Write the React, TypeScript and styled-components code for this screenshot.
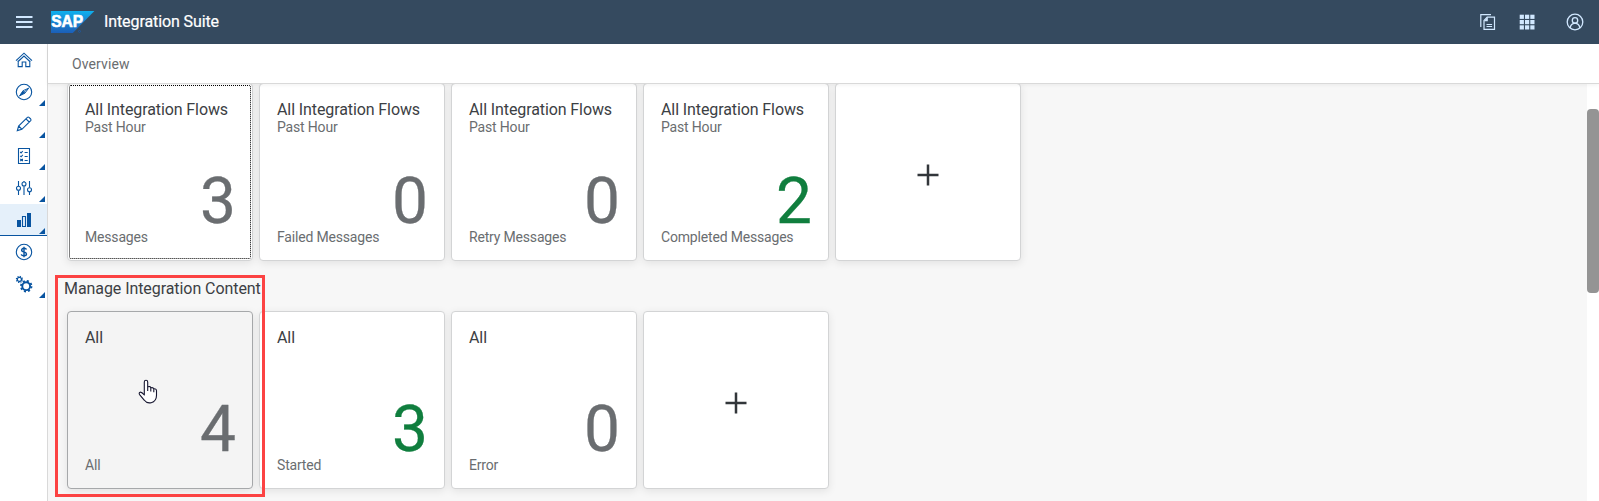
import React from "react";
import styled, { createGlobalStyle, css } from "styled-components";

const Global = createGlobalStyle`
  *, *::before, *::after { box-sizing: border-box; }
  body { margin: 0; background: #f7f7f7; font-family: Roboto, "Noto Sans", sans-serif; color: #32363a; overflow: hidden; }
`;

const Page = styled.div`
  display: flex;
  flex-direction: column;
  width: 1599px;
  height: 501px;
  overflow: hidden;
`;

const ShellBar = styled.header`
  flex: none;
  display: flex;
  align-items: center;
  height: 44px;
  padding: 0 15px 0 16px;
  background: #354a5f;
  color: #d1e8ff;
`;

const MenuIcon = styled.svg`
  display: block;
  margin-right: 18px;
`;

const Logo = styled.svg`
  display: block;
  margin-right: 9px;
`;

const ProductTitle = styled.h1`
  flex: 1;
  margin: 0;
  font-size: 16px;
  line-height: 20px;
  font-weight: 400;
  -webkit-text-stroke: 0.2px #fff;
  letter-spacing: -0.1px;
  color: #fff;
`;

const Tools = styled.div`
  display: flex;
  align-items: center;

  svg { display: block; }
  svg + svg { margin-left: 23px; }
  svg:last-child { margin-left: 31px; }
`;

const Body = styled.div`
  flex: 1;
  display: flex;
  min-height: 0;
`;

const SideNav = styled.nav`
  flex: none;
  width: 48px;
  background: #fff;
  border-right: 1px solid #d9d9d9;
`;

const NavItem = styled.div<{ $selected?: boolean; $expandable?: boolean }>`
  position: relative;
  display: flex;
  align-items: center;
  justify-content: center;
  height: 32px;
  padding-left: 1px;
  color: #0854a0;
  ${(p) => p.$selected && css`
    background: #e5f0fa;
    box-shadow: inset 0 -1px 0 #0854a0;
  `}
  ${(p) => p.$expandable && css`
    &::after {
      content: "";
      position: absolute;
      right: 2px;
      bottom: 2px;
      border-left: 6px solid transparent;
      border-bottom: 6px solid #0854a0;
    }
  `}
  svg { display: block; }
`;

const Main = styled.main`
  flex: 1;
  display: flex;
  flex-direction: column;
  min-width: 0;
`;

const SubHeader = styled.div`
  position: relative;
  z-index: 1;
  flex: none;
  height: 39px;
  padding: 10px 24px;
  background: #fff;
  box-shadow: 0 1px 0 #d9d9d9, 0 2px 4px rgba(0, 0, 0, 0.06);
  font-size: 14px;
  line-height: 20px;
  letter-spacing: 0.1px;
  color: #6a6d70;
`;

const ScrollArea = styled.div`
  flex: 1;
  display: flex;
  min-height: 0;
`;

const Content = styled.div`
  flex: 1;
  background: #f7f7f7;
`;

const ScrollTrack = styled.div`
  flex: none;
  width: 12px;
  padding-top: 26px;
  background: #fff;
`;

const ScrollThumb = styled.div`
  height: 184px;
  border-radius: 4px;
  background: #949494;
`;

const TileRow = styled.div`
  display: flex;
  gap: 6px;
  padding-left: 19px;
`;

const SectionTitle = styled.h2`
  margin: 17px 0 12px;
  padding-left: 16px;
  font-size: 16px;
  line-height: 21px;
  font-weight: 400;
  letter-spacing: -0.07px;
  color: #3c4044;
`;

const TileBox = styled.div<{ $hovered?: boolean; $focused?: boolean; $centered?: boolean }>`
  position: relative;
  display: flex;
  flex-direction: column;
  width: 186px;
  height: 178px;
  padding: 16px 17px 0;
  border: 1px solid ${(p) => (p.$hovered ? "#a6a8aa" : "#d3d4d5")};
  border-radius: 4px;
  background: ${(p) => (p.$hovered ? "#f4f4f4" : "#fff")};
  box-shadow: 0 2px 8px rgba(0, 0, 0, 0.09);
  ${(p) => p.$centered && css`
    align-items: center;
    justify-content: center;
    padding: 6px 0 0;
  `}
  ${(p) => p.$focused && css`
    &::after {
      content: "";
      position: absolute;
      inset: 1px;
      border: 1px dotted #000;
      border-radius: 2px;
    }
  `}
`;

const TileTitle = styled.div`
  font-size: 16px;
  line-height: 20px;
  letter-spacing: -0.1px;
  color: #3c4044;
  white-space: nowrap;
`;

const TileSubtitle = styled.div`
  height: 52px;
  font-size: 14px;
  line-height: 14px;
  letter-spacing: -0.17px;
  color: #6a6d70;
`;

const TileValue = styled.div<{ $good?: boolean }>`
  height: 60px;
  margin-right: -1px;
  font-size: 64px;
  line-height: 60px;
  text-align: right;
  -webkit-text-stroke: 0.3px currentColor;
  color: ${(p) => (p.$good ? "#107e3e" : "#6a6d70")};
`;

const TileFooter = styled.div`
  margin-top: -4px;
  font-size: 14px;
  line-height: 18px;
  letter-spacing: -0.18px;
  color: #6a6d70;
  white-space: nowrap;
`;

const Highlight = styled.div`
  position: absolute;
  left: 55px;
  top: 275px;
  width: 210px;
  height: 222px;
  border: 3px solid #fc4343;
`;

const Pointer = styled.svg`
  position: absolute;
  left: 138px;
  top: 379px;
`;

type TileData = { title: string; subtitle?: string; value: string; footer: string; good?: boolean; hovered?: boolean; focused?: boolean };

const flowTiles: TileData[] = [
  { title: "All Integration Flows", subtitle: "Past Hour", value: "3", footer: "Messages", focused: true },
  { title: "All Integration Flows", subtitle: "Past Hour", value: "0", footer: "Failed Messages" },
  { title: "All Integration Flows", subtitle: "Past Hour", value: "0", footer: "Retry Messages" },
  { title: "All Integration Flows", subtitle: "Past Hour", value: "2", footer: "Completed Messages", good: true },
];

const contentTiles: TileData[] = [
  { title: "All", value: "4", footer: "All", hovered: true },
  { title: "All", value: "3", footer: "Started", good: true },
  { title: "All", value: "0", footer: "Error" },
];

const Tile = ({ data }: { data: TileData }) => (
  <TileBox $hovered={data.hovered} $focused={data.focused}>
    <TileTitle>{data.title}</TileTitle>
    <TileSubtitle>{data.subtitle}</TileSubtitle>
    <TileValue $good={data.good}>{data.value}</TileValue>
    <TileFooter>{data.footer}</TileFooter>
  </TileBox>
);

const AddTile = () => (
  <TileBox $centered>
    <svg width="22" height="22" viewBox="0 0 22 22">
      <path d="M11 0.5v21M0.5 11h21" stroke="#32363a" strokeWidth="2.5" />
    </svg>
  </TileBox>
);

const Glyph = ({ children }: { children: React.ReactNode }) => (
  <svg width="18" height="18" viewBox="0 0 18 18" fill="none" stroke="currentColor" strokeWidth="1.1">
    {children}
  </svg>
);

const HomeIcon = () => (
  <Glyph>
    <path d="M1 9.6 9 2.2l8 7.4M3.2 9.4v6.2h4v-4.6h3.6v4.6h4V9.4M2.6 11 9 5l6.4 6" />
  </Glyph>
);

const CompassIcon = () => (
  <Glyph>
    <circle cx="9" cy="9" r="7.7" />
    <path d="M4.4 13 8 7.6l2.2 2.5z" fill="currentColor" stroke="none" />
    <path d="M4.6 12.8 13.6 5.2 10 10.2z" strokeWidth="0.9" />
    <path d="M4.6 12.8 8 7.7l5.6-2.5" strokeWidth="0.9" />
  </Glyph>
);

const PencilIcon = () => (
  <Glyph>
    <path d="M2.3 15.6 3.6 11 12.4 2.3q.8-.7 1.6 0l1.7 1.7q.7.8 0 1.6L6.9 14.3zM11 3.8l3.2 3.2M3.6 11l3.2 3.2M2.6 14.6l.8.8" />
  </Glyph>
);

const ChecklistIcon = () => (
  <Glyph>
    <path d="M3.5 1.5h11v15h-11z" />
    <path d="m5.2 5 .9.9 1.7-1.9M5.2 8.9l.9.9 1.7-1.9M5.4 11.8l2.4 2.4M7.8 11.8l-2.4 2.4M5.2 13h2.8M9.6 5.5h3.1M9.6 9.5h3.1M9.6 13.5h3.1" />
  </Glyph>
);

const SlidersIcon = () => (
  <Glyph>
    <path d="M3.5 2v5.2M3.5 11.4V16M9 2v1M9 7.2V16M14.5 2v6.6M14.5 12.8V16" />
    <circle cx="3.5" cy="9.3" r="2" />
    <circle cx="9" cy="5" r="2" />
    <circle cx="14.5" cy="10.7" r="2" />
  </Glyph>
);

const ChartIcon = () => (
  <Glyph>
    <path d="M2 9h4v7H2zM12 2h4v14h-4z" fill="currentColor" stroke="none" />
    <path d="M7.5 5.5h3v10h-3z" />
  </Glyph>
);

const DollarIcon = () => (
  <Glyph>
    <circle cx="9" cy="9" r="7.7" />
    <path d="M11.5 6.6Q11 5.2 9 5.2T6.6 7Q6.6 8.6 9 9t2.5 2q0 1.8-2.5 1.8T6.4 11.3M9 3.8v10.4" strokeWidth="1.4" />
  </Glyph>
);

const GearsIcon = () => (
  <Glyph>
    <circle cx="11.2" cy="11.2" r="3.9" strokeWidth="1.9" />
    <circle cx="11.2" cy="11.2" r="5.3" strokeWidth="1.8" strokeDasharray="2.08 2.08" />
    <circle cx="4.4" cy="4.4" r="2.1" strokeWidth="1.3" />
    <circle cx="4.4" cy="4.4" r="3" strokeWidth="1.2" strokeDasharray="1.18 1.18" />
  </Glyph>
);

const navItems = [
  { key: "home", icon: <HomeIcon /> },
  { key: "discover", icon: <CompassIcon />, expandable: true },
  { key: "design", icon: <PencilIcon />, expandable: true },
  { key: "test", icon: <ChecklistIcon />, expandable: true },
  { key: "configure", icon: <SlidersIcon />, expandable: true },
  { key: "monitor", icon: <ChartIcon />, expandable: true, selected: true },
  { key: "monetize", icon: <DollarIcon /> },
  { key: "settings", icon: <GearsIcon />, expandable: true },
];

const SapLogo = () => (
  <Logo width="44" height="22" viewBox="0 0 44 22">
    <defs>
      <linearGradient id="sapBlue" x1="0" y1="0" x2="0" y2="1">
        <stop offset="0" stopColor="#0fb1ee" />
        <stop offset="0.5" stopColor="#1784d2" />
        <stop offset="1" stopColor="#1c5fb8" />
      </linearGradient>
    </defs>
    <path d="M0 0h43.4L21.8 22H0z" fill="url(#sapBlue)" />
    <text x="0.2" y="16.4" fontFamily="Liberation Sans, sans-serif" fontWeight="700" fontSize="16" textLength="32" lengthAdjust="spacingAndGlyphs" fill="#fff" stroke="#fff" strokeWidth="0.6">SAP</text>
    <circle cx="28.5" cy="20.4" r="1" fill="none" stroke="#1c5fb8" strokeWidth="0.6" />
  </Logo>
);

export default function App() {
  return (
    <Page>
      <Global />
      <ShellBar>
        <MenuIcon width="17" height="14" viewBox="0 0 17 14" stroke="#d1e8ff" strokeWidth="2">
          <path d="M0 2h16.5M0 7h16.5M0 12h16.5" />
        </MenuIcon>
        <SapLogo />
        <ProductTitle>Integration Suite</ProductTitle>
        <Tools>
          <svg width="16" height="18" viewBox="0 0 16 18" fill="none" stroke="#d1e8ff" strokeWidth="1.2">
            <path d="M11 1.6H.8V14" />
            <path d="M7.2 4.2h7.3v12.2H4V7.6z" />
            <path d="M7.8 4.2v4H4l3.4-4z" fill="#d1e8ff" stroke="none" />
            <path d="M6.5 11.5h5.6M6.5 13.5h5.6" />
          </svg>
          <svg width="16" height="16" viewBox="0 0 16 16" fill="#d1e8ff">
            {[0.7, 6, 11.3].map((y) => [0.7, 6, 11.3].map((x) => <rect key={`${x}-${y}`} x={x} y={y} width="4.2" height="4.2" />))}
          </svg>
          <svg width="18" height="18" viewBox="0 0 18 18" fill="none" stroke="#d1e8ff" strokeWidth="1.3">
            <circle cx="9" cy="9" r="7.8" />
            <circle cx="9" cy="7.4" r="2.7" />
            <path d="M4.2 14.8q.6-4.2 4.8-4.6 4.2.4 4.8 4.6" />
          </svg>
        </Tools>
      </ShellBar>
      <Body>
        <SideNav>
          {navItems.map((n) => (
            <NavItem key={n.key} $expandable={n.expandable} $selected={n.selected}>{n.icon}</NavItem>
          ))}
        </SideNav>
        <Main>
          <SubHeader>Overview</SubHeader>
          <ScrollArea>
            <Content>
              <TileRow>
                {flowTiles.map((t) => <Tile key={t.footer} data={t} />)}
                <AddTile />
              </TileRow>
              <SectionTitle>Manage Integration Content</SectionTitle>
              <TileRow>
                {contentTiles.map((t) => <Tile key={t.footer} data={t} />)}
                <AddTile />
              </TileRow>
            </Content>
            <ScrollTrack><ScrollThumb /></ScrollTrack>
          </ScrollArea>
        </Main>
      </Body>
      <Highlight />
      <Pointer width="20" height="26" viewBox="0 0 20 26">
        <path d="M6.3 16V2.9q0-1.7 1.7-1.7t1.7 1.7v5q2.6-1 3.1.9 2.4-.7 3 1 2.5-.4 2.7 2v4.4q0 6-5.3 7.5-4.4 1-6.8-2.4L1.6 15.6q-1-1.9.5-2.4 1.6-.3 4.2 2.8zM9.7 7.9v4.2M12.8 8.8v3.8M15.8 9.8v3.4" fill="#fff" stroke="#15152f" strokeWidth="1.1" strokeLinejoin="round" />
      </Pointer>
    </Page>
  );
}
